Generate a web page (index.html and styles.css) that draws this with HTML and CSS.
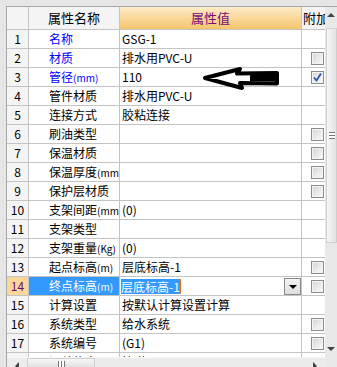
FILE: index.html
```html
<!DOCTYPE html>
<html>
<head>
	<meta charset="utf-8">
	<title>属性编辑</title>
	<link rel="stylesheet" href="styles.css">
</head>
<body>
<div class="frame">
	<div class="box">
		<div class="main">
			<div class="grid">
				<div class="row head">
					<div class="c num"></div>
					<div class="c name hd">属性名称</div>
					<div class="c val hd hv">属性值</div>
					<div class="c ext hd">附加</div>
				</div>
				<div class="row"><div class="c num">1</div><div class="c name blue">名称</div><div class="c val">GSG-1</div><div class="c ext"></div></div>
				<div class="row"><div class="c num">2</div><div class="c name blue">材质</div><div class="c val">排水用PVC-U</div><div class="c ext"><span class="cb"></span></div></div>
				<div class="row"><div class="c num">3</div><div class="c name blue">管径<small>(mm)</small></div><div class="c val">110</div><div class="c ext"><span class="cb"><svg width="11" height="11" viewBox="0 0 11 11"><path d="M2 5.5 L4.5 8.5 L9 1.5" fill="none" stroke="#2f55b5" stroke-width="1.8"/></svg></span></div></div>
				<div class="row"><div class="c num">4</div><div class="c name">管件材质</div><div class="c val">排水用PVC-U</div><div class="c ext"></div></div>
				<div class="row"><div class="c num">5</div><div class="c name">连接方式</div><div class="c val">胶粘连接</div><div class="c ext"></div></div>
				<div class="row"><div class="c num">6</div><div class="c name">刷油类型</div><div class="c val"></div><div class="c ext"><span class="cb"></span></div></div>
				<div class="row"><div class="c num">7</div><div class="c name">保温材质</div><div class="c val"></div><div class="c ext"><span class="cb"></span></div></div>
				<div class="row"><div class="c num">8</div><div class="c name">保温厚度<small>(mm)</small></div><div class="c val"></div><div class="c ext"><span class="cb"></span></div></div>
				<div class="row"><div class="c num">9</div><div class="c name">保护层材质</div><div class="c val"></div><div class="c ext"><span class="cb"></span></div></div>
				<div class="row"><div class="c num">10</div><div class="c name">支架间距<small>(mm)</small></div><div class="c val">(0)</div><div class="c ext"></div></div>
				<div class="row"><div class="c num">11</div><div class="c name">支架类型</div><div class="c val"></div><div class="c ext"></div></div>
				<div class="row"><div class="c num">12</div><div class="c name">支架重量<small>(Kg)</small></div><div class="c val">(0)</div><div class="c ext"></div></div>
				<div class="row"><div class="c num">13</div><div class="c name">起点标高<small>(m)</small></div><div class="c val">层底标高-1</div><div class="c ext"><span class="cb"></span></div></div>
				<div class="row cur">
					<div class="c num">14</div>
					<div class="c name">终点标高<small>(m)</small></div>
					<div class="c val edit">
						<span class="sel">层底标高-1</span><span class="caret"></span>
						<span class="drop"><i></i></span>
					</div>
					<div class="c ext"><span class="cb"></span></div>
				</div>
				<div class="row"><div class="c num">15</div><div class="c name">计算设置</div><div class="c val">按默认计算设置计算</div><div class="c ext"></div></div>
				<div class="row"><div class="c num">16</div><div class="c name">系统类型</div><div class="c val">给水系统</div><div class="c ext"><span class="cb"></span></div></div>
				<div class="row"><div class="c num">17</div><div class="c name">系统编号</div><div class="c val">(G1)</div><div class="c ext"><span class="cb"></span></div></div>
				<div class="row"><div class="c num">18</div><div class="c name">汇总信息</div><div class="c val">管道</div><div class="c ext"></div></div>
			</div>
			<div class="vscroll">
				<div class="vbtn"><i class="up"></i></div>
				<div class="vthumb"><b></b></div>
				<div class="vtrack"></div>
				<div class="vbtn down"><i class="dn"></i></div>
			</div>
		</div>
		<div class="hbar">
			<div class="hscroll">
				<div class="hbtn"><i class="lt"></i></div>
				<div class="hthumb"><b></b></div>
				<div class="htrack"></div>
				<div class="hbtn"><i class="rt"></i></div>
			</div>
			<div class="corner"></div>
		</div>
	</div>
	<svg class="mark" width="84" height="28" viewBox="0 0 84 28">
		<path d="M5 13 L40 4 L37 8.5 L77 8 L77 18.5 L40 18 L42 23 Z" fill="#fff" stroke="#000" stroke-width="4" stroke-linejoin="round"/>
		<path d="M50 10 L76 10 L76 16.5 L50 16" fill="#000"/>
	</svg>
</div>
</body>
</html>
```

FILE: styles.css
```css
*
{
	margin: 0;
	padding: 0;
	box-sizing: border-box;
}
body
{
	width: 337px;
	height: 367px;
	overflow: hidden;
	background: #e6e6e6;
	font: 12px "Noto Sans CJK SC", "Liberation Sans", sans-serif;
	color: #000;
}
.frame
{
	position: relative;
	padding: 6px 0 0 6px;
}
.box
{
	border-left: 1px solid #a8a8a8;
	border-top: 1px solid #a8a8a8;
}
.main
{
	display: flex;
	height: 350px;
}
.grid
{
	width: 318px;
	overflow: hidden;
	background: #fff;
}
.row
{
	display: grid;
	grid-template-columns: 22px 91px 182px 23px;
	height: 19px;
	border-bottom: 1px solid #c4c4c4;
}
.row.head
{
	height: 23px;
}
.c
{
	border-right: 1px solid #c4c4c4;
	white-space: nowrap;
	overflow: hidden;
	line-height: 18px;
}
.c small
{
	font-size: 10px;
}
.head .c
{
	line-height: 22px;
	background: #f4f4f4;
}
.num
{
	text-align: center;
	background: #f4f4f4;
}
.name
{
	padding-left: 20px;
}
.val
{
	padding-left: 2px;
}
.ext
{
	border-right: none;
	padding-left: 9px;
}
.head .hd
{
	text-align: center;
	padding-left: 0;
	font-size: 13px;
}
.head .ext
{
	text-align: left;
	padding-left: 1px;
}
.head .hv
{
	background: linear-gradient(#fdebc8, #f5c56c);
	color: #7a0a7a;
}
.blue
{
	color: #0000ff;
}
.cb
{
	display: block;
	width: 13px;
	height: 13px;
	margin-top: 3px;
	border: 1px solid #8c8c8c;
	background: linear-gradient(135deg, #d4d4d4, #fbfbfb);
	box-shadow: inset 0 0 0 1px #f4f4f4;
}
.cb svg
{
	display: block;
}
/* 当前行 */
.cur .num
{
	background: #fbd79a;
	color: #6a0a6a;
}
.cur .name
{
	background: #3399ff;
	color: #fff;
}
.edit
{
	display: flex;
	align-items: center;
	padding-left: 1px;
}
.sel
{
	background: #3399ff;
	color: #fff;
	line-height: 15px;
}
.caret
{
	width: 1px;
	height: 15px;
	background: #e8701a;
}
.drop
{
	margin-left: auto;
	width: 17px;
	height: 17px;
	border: 1px solid #8a8a8a;
	background: linear-gradient(#f4f4f4, #dedede);
	display: flex;
	align-items: center;
	justify-content: center;
}
.drop i
{
	border-left: 4px solid transparent;
	border-right: 4px solid transparent;
	border-top: 4px solid #000;
	margin-top: 2px;
}
/* 滚动条 */
.vscroll
{
	width: 12px;
	display: flex;
	flex-direction: column;
	background: #e9e9e9;
}
.vbtn
{
	height: 21px;
	display: flex;
	justify-content: center;
	padding-top: 6px;
}
.vbtn.down
{
	height: 17px;
	padding-top: 7px;
}
.vthumb
{
	height: 215px;
	margin-left: 1px;
	border: 1px solid #cfcfcf;
	background: linear-gradient(90deg, #f8f8f8, #e2e2e2);
	display: flex;
	align-items: center;
	justify-content: center;
}
.vthumb b
{
	width: 6px;
	height: 7px;
	border-top: 1px solid #777;
	border-bottom: 1px solid #777;
	background: linear-gradient(#fff 2px, #777 2px, #777 3px, #fff 3px);
}
.vtrack
{
	flex: 1;
}
.up, .dn, .lt, .rt
{
	display: block;
	width: 0;
	height: 0;
}
.up
{
	border-left: 4px solid transparent;
	border-right: 4px solid transparent;
	border-bottom: 4px solid #444;
}
.dn
{
	border-left: 4px solid transparent;
	border-right: 4px solid transparent;
	border-top: 4px solid #444;
}
.hbar
{
	display: flex;
	height: 10px;
}
.hscroll
{
	width: 318px;
	display: flex;
	background: #ececec;
	border-top: 1px solid #f8f8f8;
}
.corner
{
	flex: 1;
	background: #e9e9e9;
}
.hbtn
{
	width: 20px;
	display: flex;
	justify-content: center;
	padding-top: 4px;
}
.htrack
{
	flex: 1;
}
.lt
{
	border-top: 4px solid transparent;
	border-bottom: 4px solid transparent;
	border-right: 4px solid #444;
}
.rt
{
	border-top: 4px solid transparent;
	border-bottom: 4px solid transparent;
	border-left: 4px solid #444;
}
.hthumb
{
	width: 68px;
	border: 1px solid #cfcfcf;
	border-bottom: none;
	background: linear-gradient(#f8f8f8, #e2e2e2);
	display: flex;
	justify-content: center;
	padding-top: 2px;
}
.hthumb b
{
	width: 7px;
	height: 8px;
	border-left: 1px solid #777;
	border-right: 1px solid #777;
	background: linear-gradient(90deg, #fff 2px, #777 2px, #777 3px, #fff 3px);
}
.mark
{
	position: absolute;
	left: 200px;
	top: 65px;
}
```
